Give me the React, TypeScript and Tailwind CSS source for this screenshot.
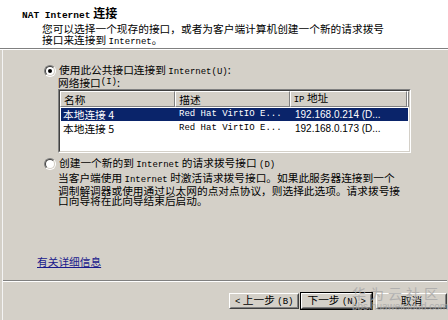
import React from 'react';

// Latin runs inside Chinese text (SimSun-like half-width glyphs)
function L({ children }: { children: React.ReactNode }) {
  return <span className="font-['Liberation_Mono',monospace] text-[9px]">{children}</span>;
}

function Radio({ checked }: { checked?: boolean }) {
  return (
    <span className="inline-block w-[12px] h-[12px] rounded-full border border-t-[#808080] border-l-[#808080] border-b-white border-r-white shrink-0">
      <span className="flex w-full h-full rounded-full border border-t-[#404040] border-l-[#404040] border-b-[#d4d0c8] border-r-[#d4d0c8] bg-white items-center justify-center">
        {checked && <span className="block w-[4px] h-[4px] rounded-full bg-black"></span>}
      </span>
    </span>
  );
}

function Button({ children, isDefault }: { children: React.ReactNode; isDefault?: boolean }) {
  return (
    <div className={isDefault ? 'border border-black' : 'border border-transparent'}>
      <div className="border border-t-white border-l-white border-b-[#404040] border-r-[#404040]">
        <div className="h-[14px] px-[4px] flex items-center justify-center border border-t-[#d4d0c8] border-l-[#d4d0c8] border-b-[#808080] border-r-[#808080] whitespace-nowrap">
          {children}
        </div>
      </div>
    </div>
  );
}

const rows = [
  { name: '本地连接 4', desc: 'Red Hat VirtIO E...', ip: '192.168.0.214 (D...', selected: true },
  { name: '本地连接 5', desc: 'Red Hat VirtIO E...', ip: '192.168.0.173 (D...', selected: false },
];

export default function App() {
  return (
    <div className="relative w-[448px] h-[320px] overflow-hidden bg-[#d4d0c8] text-black text-[10.7px] leading-[11px] font-['Noto_Sans_CJK_SC',sans-serif]">
      {/* header */}
      <div className="h-[48px] bg-white pl-[22px] pt-[7px]">
        <div className="font-bold text-[12px] leading-[12px] whitespace-nowrap">
          <span className="font-['Liberation_Mono',monospace] text-[9.5px]">NAT Internet</span> 连接
        </div>
        <div className="pl-[20px] mt-[2px] leading-[10.5px] whitespace-nowrap">
          您可以选择一个现存的接口，或者为客户端计算机创建一个新的请求拨号
          <br />
          接口来连接到 <L>Internet</L>。
        </div>
      </div>
      <div className="border-t border-[#808080]"></div>
      <div className="border-t border-white"></div>

      <div className="border-l border-[#f4f4f4] ml-[2px] h-[270px] flex flex-col">
        <div className="ml-[41px] mt-[15px] flex items-center gap-[3px] h-[12px] whitespace-nowrap">
          <Radio checked />
          <span>
            使用此公共接口连接到 <L>Internet(U)</L>:
          </span>
        </div>
        <div className="ml-[55px] h-[11px] flex items-center whitespace-nowrap">
          网络接口 <L>(I)</L>:
        </div>

        {/* list view */}
        <div className="ml-[55px] mt-[1px] w-[353px] h-[64px] border border-t-[#808080] border-l-[#808080] border-b-white border-r-white">
          <div className="w-full h-full border border-t-[#404040] border-l-[#404040] border-b-[#d4d0c8] border-r-[#d4d0c8] bg-white">
            <div className="flex h-[16px] bg-[#d4d0c8]">
              {[
                { label: '名称', w: 'w-[116px]' },
                { label: '描述', w: 'w-[115px]' },
                { label: 'IP 地址', w: 'w-[118px]' },
              ].map((c) => (
                <div
                  key={c.label}
                  className={`${c.w} h-full border border-t-white border-l-white border-b-[#808080] border-r-[#808080] pl-[3px] flex items-center whitespace-nowrap`}
                >
                  {c.label === 'IP 地址' ? (
                    <span>
                      <L>IP</L> 地址
                    </span>
                  ) : (
                    c.label
                  )}
                </div>
              ))}
              <div className="flex-1 h-full border border-t-white border-l-white border-b-[#808080] border-r-[#808080]"></div>
            </div>
            <div>
              {rows.map((r) => (
                <div key={r.name} className="flex h-[14px] items-center whitespace-nowrap">
                  <div className={`flex w-[347px] h-[13px] items-center ml-[1px] ${r.selected ? 'bg-[#0a246a] text-white' : ''}`}>
                    <span className="w-[115px] pl-[2px]">{r.name}</span>
                    <span className="w-[116px] pl-[3px] font-['Liberation_Mono',monospace] text-[9px]">{r.desc}</span>
                    <span className="pl-[3px] font-['Liberation_Sans',sans-serif] text-[10px]">{r.ip}</span>
                  </div>
                </div>
              ))}
            </div>
          </div>
        </div>

        <div className="ml-[41px] mt-[5px] flex items-center gap-[3px] h-[12px] whitespace-nowrap">
          <Radio />
          <span>
            创建一个新的到 <L>Internet</L> 的请求拨号接口 <L>(D)</L>
          </span>
        </div>
        <div className="ml-[55px] mt-[3px] leading-[10.5px] whitespace-nowrap">
          当客户端使用 <L>Internet</L> 时激活请求拨号接口。如果此服务器连接到一个
          <br />
          调制解调器或使用通过以太网的点对点协议，则选择此选项。请求拨号接
          <br />
          口向导将在此向导结束后启动。
        </div>

        <div className="ml-[34px] mt-[49px] h-[12px] flex items-center">
          <span className="text-[#1a1a8c] underline whitespace-nowrap">有关详细信息</span>
        </div>

        <div className="mt-[12px] w-[444px] border-t border-[#808080]"></div>
        <div className="w-[444px] border-t border-white"></div>

        <div className="mt-[10px] flex items-start">
          <div className="ml-[225px] flex">
            <Button>
              <span>
                <L>&lt;</L> 上一步 <L>(B)</L>
              </span>
            </Button>
            <Button isDefault>
              <span>
                下一步 <L>(N)</L> <L>&gt;</L>
              </span>
            </Button>
          </div>
          <div className="ml-[2px] w-[77px]">
            <Button>取消</Button>
          </div>
        </div>
      </div>

      {/* watermark */}
      <div className="absolute left-[352px] top-[286px] pointer-events-none text-[#a8a8a8] opacity-80">
        <div className="text-[14px] leading-[15px] tracking-[4px] whitespace-nowrap">华为云社区</div>
        <div className="font-['Liberation_Sans',sans-serif] text-[10px] leading-[11px] whitespace-nowrap">bbs.huaweicloud.com</div>
      </div>
    </div>
  );
}
